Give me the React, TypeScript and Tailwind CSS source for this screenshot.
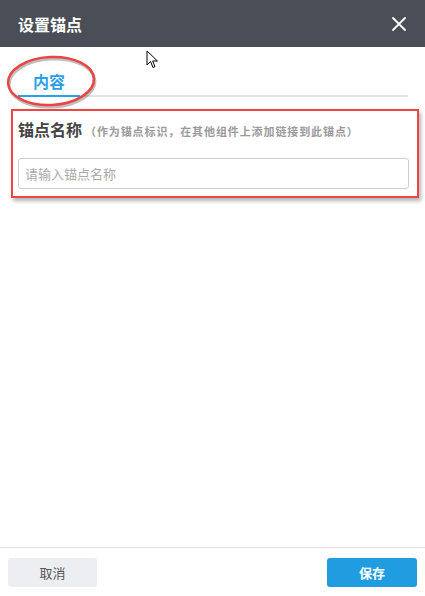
import React from "react";

const font = { fontFamily: '"Noto Sans CJK SC", "Noto Sans", sans-serif' };

export default function App() {
  return (
    <div className="relative flex h-[596px] w-[425px] flex-col overflow-hidden bg-white" style={font}>
      <header className="flex h-[47px] items-center justify-between bg-[#4a4e56] pl-[18px] pr-[19px]">
        <h1 className="text-[16px] font-bold text-white">设置锚点</h1>
        <svg width="14" height="14" viewBox="0 0 14 14" className="text-white">
          <path d="M1 1L13 13M13 1L1 13" stroke="currentColor" strokeWidth="1.8" strokeLinecap="round" />
        </svg>
      </header>

      <main className="flex-1">
        <div className="mx-[18px] mt-[22px] flex border-b-2 border-[#e3e3e3] w-[390px]">
          <div className="-mb-[2px] w-[62px] border-b-2 border-[#2d9fe8] pb-[2px] text-center text-[16px] font-bold leading-[24px] text-[#2d9fe8]">
            内容
          </div>
        </div>

        <section className="mx-[11px] mt-[12px] w-[408px] border-2 border-[#f04545] pb-[7px] pl-[5px] pr-[8px] pt-[6px] shadow-[2px_3px_4px_rgba(0,0,0,0.3)]">
          <div className="flex items-baseline">
            <span className="text-[16px] font-bold text-[#444]">锚点名称</span>
            <span className="ml-[3px] text-[11px] font-bold tracking-[0.9px] text-[#9a9a9a]">（作为锚点标识，在其他组件上添加链接到此锚点）</span>
          </div>
          <input
            className="mt-[17px] h-[31px] w-full rounded-[3px] border border-[#cfcfcf] px-[6px] text-[13px] text-[#333] outline-none placeholder:text-[#aaa]"
            placeholder="请输入锚点名称"
            style={font}
          />
        </section>
      </main>

      <footer className="flex h-[49px] items-start justify-between border-t border-[#e5e5e5] px-[8px] pt-[10px]">
        <button className="h-[29px] w-[89px] rounded-[3px] bg-[#eceef1] text-[13px] text-[#555]">取消</button>
        <button className="h-[29px] w-[90px] rounded-[3px] bg-[#1f9de0] text-[13px] font-bold text-white">保存</button>
      </footer>

      <svg className="pointer-events-none absolute left-[4px] top-[53px]" width="94" height="56" viewBox="0 0 94 56">
        <ellipse cx="47" cy="28" rx="43" ry="24" fill="none" stroke="rgba(0,0,0,0.25)" strokeWidth="3" transform="translate(1 2) rotate(-3 47 28)" />
        <ellipse cx="47" cy="28" rx="43" ry="24" fill="none" stroke="#ec4343" strokeWidth="2.5" transform="rotate(-3 47 28)" />
      </svg>

      <svg className="pointer-events-none absolute left-[146px] top-[50px]" width="14" height="20" viewBox="0 0 14 20">
        <path d="M1 1L1 15L4.5 11.5L7 17.5L9 16.6L6.6 11L11.5 11Z" fill="white" stroke="black" strokeWidth="1" strokeLinejoin="round" />
      </svg>
    </div>
  );
}
